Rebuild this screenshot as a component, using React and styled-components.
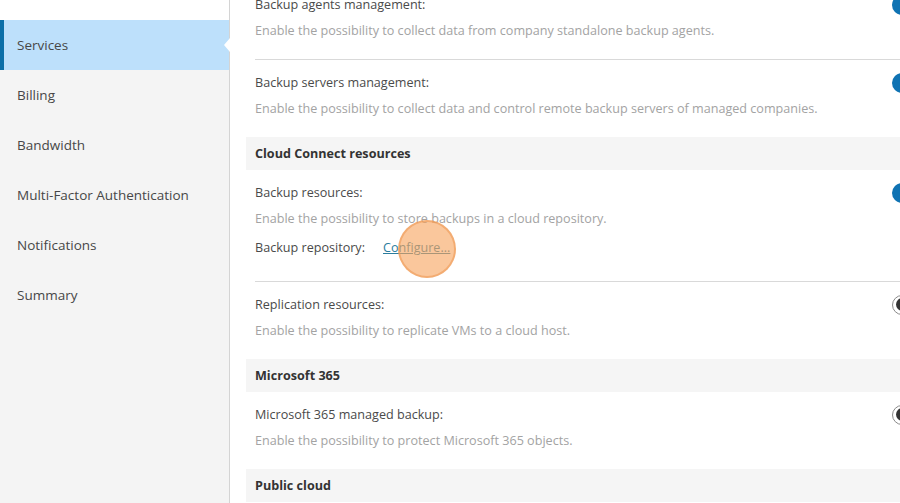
import React from "react";
import styled, { createGlobalStyle } from "styled-components";

const GlobalStyle = createGlobalStyle`
	html, body {
		margin: 0;
		padding: 0;
		overflow: hidden;
		background: #fff;
	}
	body {
		font-family: "Open Sans", "Liberation Sans", sans-serif;
		font-size: 12.6px;
		color: #444;
	}
`;

const Page = styled.div`
	display: flex;
	width: 940px;
	height: 503px;
	overflow: hidden;
`;

const Sidebar = styled.nav`
	flex: 0 0 229px;
	background: #f4f4f4;
	border-right: 1px solid #d4d4d4;
	display: flex;
	flex-direction: column;
	font-size: 13.5px;
`;

const SidebarTop = styled.div`
	height: 20px;
	background: #fff;
	overflow: hidden;
	display: flex;
	align-items: flex-end;
`;

const DoneStep = styled.div`
	padding-left: 17px;
	line-height: 18px;
	margin-bottom: -14px;
	color: #a6d6f2;
`;

const NavItem = styled.div`
	position: relative;
	height: 50px;
	display: flex;
	align-items: center;
	padding-left: 17px;
	color: #474747;
	background: ${(p) => (p.$active ? "#bde0fb" : "transparent")};
	box-shadow: ${(p) => (p.$active ? "inset 4px 0 0 #0b6fa8" : "none")};

	&::after {
		content: "";
		display: ${(p) => (p.$active ? "block" : "none")};
		position: absolute;
		right: -1px;
		top: 18px;
		border-style: solid;
		border-width: 7px 6px 7px 0;
		border-color: transparent #fff transparent transparent;
	}
`;

const Main = styled.main`
	flex: 1;
	padding-left: 16px;
	margin-top: -18px;
	position: relative;
`;

const SectionHeader = styled.div`
	height: 33px;
	display: flex;
	align-items: center;
	padding-left: 9px;
	background: #f5f5f5;
	font-weight: 700;
	color: #333;
`;

const Option = styled.div`
	margin-left: 9px;
	padding-top: 13px;
	padding-bottom: ${(p) => (p.$tall ? "23px" : "18px")};
	display: flex;
	justify-content: space-between;
	align-items: flex-start;
	border-bottom: ${(p) => (p.$divider ? "1px solid #d9d9d9" : "none")};
`;

const OptionText = styled.div`
	display: flex;
	flex-direction: column;
`;

const Label = styled.div`
	line-height: 20px;
	color: #4a4a4a;
`;

const Description = styled.div`
	margin-top: 6px;
	line-height: 20px;
	color: #a3a3a3;
`;

const RepoRow = styled.div`
	margin-top: 9px;
	line-height: 20px;
	color: #4a4a4a;
	display: flex;
	gap: 18px;
	position: relative;
`;

const ConfigureLink = styled.a`
	color: #2b7d9e;
	text-decoration: underline;
	cursor: pointer;
`;

const ClickMark = styled.span`
	position: absolute;
	left: 143px;
	top: -18px;
	width: 54px;
	height: 54px;
	border-radius: 50%;
	background: rgba(247, 164, 96, 0.62);
	border: 2px solid rgba(236, 150, 80, 0.55);
	pointer-events: none;
`;

const Toggle = styled.span`
	flex: 0 0 40px;
	height: 20px;
	margin-right: 8px;
	box-sizing: border-box;
	border-radius: 11px;
	position: relative;
	background: ${(p) => (p.$on ? "#0f73b3" : "#fff")};
	border: ${(p) => (p.$on ? "none" : "1.5px solid #8a8a8a")};

	&::before {
		content: "";
		position: absolute;
		top: 2px;
		left: ${(p) => (p.$on ? "22px" : "2.5px")};
		width: 13px;
		height: 13px;
		border-radius: 50%;
		background: ${(p) => (p.$on ? "#fff" : "#333")};
	}
`;

const navItems = [
	"Services",
	"Billing",
	"Bandwidth",
	"Multi-Factor Authentication",
	"Notifications",
	"Summary",
];

const SettingOption = ({ label, description, on, divider, children }) => (
	<Option $divider={divider} $tall={!!children}>
		<OptionText>
			<Label>{label}</Label>
			<Description>{description}</Description>
			{children}
		</OptionText>
		<Toggle $on={on} />
	</Option>
);

const App = () => {
	return (
		<Page>
			<GlobalStyle />
			<Sidebar>
				<SidebarTop>
					<DoneStep>Company Info</DoneStep>
				</SidebarTop>
				{navItems.map((item, index) => (
					<NavItem key={item} $active={index === 0}>
						{item}
					</NavItem>
				))}
			</Sidebar>
			<Main>
				<SettingOption
					label="Backup agents management:"
					description="Enable the possibility to collect data from company standalone backup agents."
					on
					divider
				/>
				<SettingOption
					label="Backup servers management:"
					description="Enable the possibility to collect data and control remote backup servers of managed companies."
					on
				/>
				<SectionHeader>Cloud Connect resources</SectionHeader>
				<SettingOption
					label="Backup resources:"
					description="Enable the possibility to store backups in a cloud repository."
					on
					divider
				>
					<RepoRow>
						<span>Backup repository:</span>
						<ConfigureLink>Configure...</ConfigureLink>
						<ClickMark />
					</RepoRow>
				</SettingOption>
				<SettingOption
					label="Replication resources:"
					description="Enable the possibility to replicate VMs to a cloud host."
				/>
				<SectionHeader>Microsoft 365</SectionHeader>
				<SettingOption
					label="Microsoft 365 managed backup:"
					description="Enable the possibility to protect Microsoft 365 objects."
				/>
				<SectionHeader>Public cloud</SectionHeader>
			</Main>
		</Page>
	);
};

export default App;
